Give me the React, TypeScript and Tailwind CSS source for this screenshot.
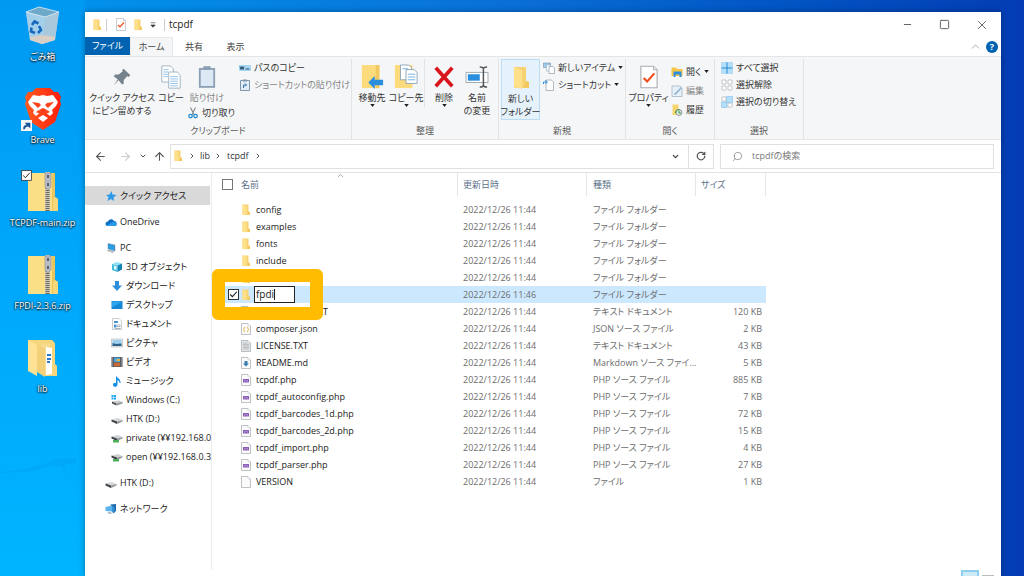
import React from "react";
import { ArrowLeft, ArrowRight, ArrowUp, ChevronDown, ChevronRight, ChevronUp, Minus, RotateCw, Search, Square, X } from "lucide-react";

type FileKind = "folder" | "text" | "json" | "md" | "php" | "blank";

interface FileRow {
  name: string;
  kind: FileKind;
  date?: string;
  type: string;
  size?: string;
  renaming?: boolean;
}

const FOLDER_TYPE = "ファイル フォルダー";
const PHP_TYPE = "PHP ソース ファイル";

const files: FileRow[] = [
  { name: "config", kind: "folder", type: FOLDER_TYPE },
  { name: "examples", kind: "folder", type: FOLDER_TYPE },
  { name: "fonts", kind: "folder", type: FOLDER_TYPE },
  { name: "include", kind: "folder", type: FOLDER_TYPE },
  { name: "tools", kind: "folder", type: FOLDER_TYPE },
  { name: "fpdi", kind: "folder", type: FOLDER_TYPE, date: "2022/12/26 11:46", renaming: true },
  { name: "CHANGELOG.TXT", kind: "text", type: "テキスト ドキュメント", size: "120 KB" },
  { name: "composer.json", kind: "json", type: "JSON ソース ファイル", size: "2 KB" },
  { name: "LICENSE.TXT", kind: "text", type: "テキスト ドキュメント", size: "43 KB" },
  { name: "README.md", kind: "md", type: "Markdown ソース ファイ...", size: "5 KB" },
  { name: "tcpdf.php", kind: "php", type: PHP_TYPE, size: "885 KB" },
  { name: "tcpdf_autoconfig.php", kind: "php", type: PHP_TYPE, size: "7 KB" },
  { name: "tcpdf_barcodes_1d.php", kind: "php", type: PHP_TYPE, size: "72 KB" },
  { name: "tcpdf_barcodes_2d.php", kind: "php", type: PHP_TYPE, size: "15 KB" },
  { name: "tcpdf_import.php", kind: "php", type: PHP_TYPE, size: "4 KB" },
  { name: "tcpdf_parser.php", kind: "php", type: PHP_TYPE, size: "27 KB" },
  { name: "VERSION", kind: "blank", type: "ファイル", size: "1 KB" },
];

/* ---------- icons ---------- */

const FolderIcon = ({ className = "h-3 w-[10px]" }: { className?: string }) => (
  <svg viewBox="0 0 20 24" className={`${className} shrink-0`}>
    <path d="M3 1h12v14l3 1v6H3z" fill="#f6d273" />
    <path d="M15 15l3 1v6h-5z" fill="#f3c95c" />
    <path d="M3 1l8 3v19l-8-2z" fill="#ffe08a" />
  </svg>
);

const FileIcon = ({ kind }: { kind: FileKind }) => {
  if (kind === "folder") return <FolderIcon />;
  return (
    <svg viewBox="0 0 20 24" className="h-3 w-[10px] shrink-0">
      <path d="M1 1h13l5 5v17H1z" fill={kind === "text" ? "#e3e5e6" : "#fbfbfb"} stroke="#a9adb1" strokeWidth="1.5" />
      <path d="M14 1v5h5" fill="#fff" stroke="#b9bcbf" />
      {kind === "text" && <path d="M4 6h9M4 9h12M4 12h12M4 15h12M4 18h12" stroke="#aab0b5" strokeWidth="1.4" />}
      {kind === "json" && (
        <path d="M8 8c-3 0-1 4-3 5 2 1 0 5 3 5M12 8c3 0 1 4 3 5-2 1 0 5-3 5" fill="none" stroke="#d9a92c" strokeWidth="1.8" />
      )}
      {kind === "md" && <path d="M7 8h6v5h3l-6 6-6-6h3z" fill="#3c7fb1" />}
      {kind === "php" && <path d="M4 10h12v7H4z" fill="#8a5cb8" />}
      {kind === "php" && <path d="M6 14h2M9 13h2M12 14h2" stroke="#d8c6ec" strokeWidth="1.5" />}
    </svg>
  );
};

const CheckDocIcon = ({ className }: { className: string }) => (
  <svg viewBox="0 0 20 26" className={`${className} shrink-0`}>
    <path d="M1 1h14l4 4v20H1z" fill="#fff" stroke="#a6abb0" strokeWidth="1.2" />
    <path d="M15 1v4h4" fill="#eee" stroke="#a6abb0" />
    <path d="M4 14l4 4 8-9" fill="none" stroke="#f04e1c" strokeWidth="2.4" />
  </svg>
);

const BinIcon = () => (
  <svg viewBox="0 0 36 40" className="h-10 w-9">
    <path d="M1 6l13-5 20 5-4 28-13 4-12-4z" fill="#a8cfe6" opacity=".85" />
    <path d="M1 6l13-5 20 5-14 5z" fill="#6fa9c9" />
    <path d="M20 11l14-5-4 28-12 4z" fill="#a9c8dc" />
    <path d="M1 6l19 5-2 27-13-4z" fill="#a3cfea" />
    <path d="M5 31l13-2 12 2v3l-13 4-12-4z" fill="#d9cfc7" />
    <path d="M1 6l13-5 20 5-14 5z" fill="none" stroke="#dcecf5" strokeWidth=".8" />
    <g fill="none" stroke="#1668bd" strokeWidth="2.6">
      <path d="M7 19l2.500-3.500 4 2M14 20l2 4-3 3M10 27l-4-1.500 .5-4" />
    </g>
  </svg>
);

const BraveIcon = () => (
  <svg viewBox="0 0 36 42" className="h-11 w-9">
    <defs>
      <linearGradient id="brave" x1="0" x2="1">
        <stop offset="0" stopColor="#ff5a1f" />
        <stop offset="1" stopColor="#ff1f0c" />
      </linearGradient>
    </defs>
    <path d="M11 0h14l4 4 4 0 3 5-1 4 1 3-6 18-12 8-12-8L0 16l1-3-1-4 3-5h4z" fill="url(#brave)" />
    <path d="M8 7l6 1 4-1 4 1 6-1 5 7-2 4-4 4 1 3-3 3-5-4 2-2-4-2-4 2 2 2-5 4-3-3 1-3-4-4-2-4z" fill="#fff" />
    <path d="M13 30l5-3 5 3-5 4z" fill="#fff" />
    <path d="M7 14l7 1 2 2-3 3zM29 14l-7 1-2 2 3 3z" fill="#fb4219" />
    <path d="M11 24l3-2 4 3 4-3 3 2-4 2-3 1-3-1z" fill="#fb4219" />
  </svg>
);

const ZipIcon = () => (
  <svg viewBox="0 0 32 40" className="h-10 w-8">
    <path d="M1 1h27v24l3 2v12H1z" fill="#e9c55e" />
    <path d="M1 1h24v38H1z" fill="#fbdf86" />
    <path d="M28 25l3 2v12h-5V27z" fill="#f5d678" />
    <path d="M18 0h5v39h-5z" fill="#cfc9b8" />
    <path d="M20.500 16v23" stroke="#6f6a60" strokeWidth="4" strokeDasharray="1 1" />
    <path d="M18 1h6v14l-3 3-3-3z" fill="#b7bcc4" stroke="#8c9097" strokeWidth=".6" />
    <path d="M20 3h2v3h-2zM20 11h2v3h-2z" fill="#5c6068" />
  </svg>
);

const OpenFolderIcon = () => (
  <svg viewBox="0 0 32 40" className="h-10 w-8">
    <path d="M1 2h24l3 3v21l2 2v10H18z" fill="#f5d67c" />
    <path d="M14 6h9v30h-9z" fill="#f7dc8f" />
    <path d="M19 9l6 1v26l-6 1z" fill="#fff" />
    <path d="M20 17h4M20 21h4M20 24h3" stroke="#2d78c8" strokeWidth="2" />
    <path d="M1 2l9 5v31L1 33z" fill="#ffe294" />
    <path d="M10 7l8 3v29l-8-5z" fill="#f3d079" />
  </svg>
);

type SideKind = "star" | "cloud" | "pc" | "cube" | "down" | "desktop" | "doc" | "picture" | "video" | "music" | "windrive" | "drive" | "netdrive" | "network";

const sideShapes: Record<SideKind, React.ReactNode> = {
  star: <path d="M13 2l2 7 8 1-6 5 1 7-6-4-7 4 2-8-5-4 7-1z" fill="#2f9be8" />,
  cloud: (
    <>
      <path d="M1 16c0-4 4-5 5-5 1-5 9-7 12-1 4 0 6 3 5 7 0 2-2 3-4 3H5c-2 0-4-2-4-4z" fill="#0f6cc0" />
      <path d="M3 19l12-7c5-2 8 1 8 4s-2 4-4 4H5z" fill="#2b9cea" />
    </>
  ),
  pc: (
    <>
      <path d="M6 3l14 3v12L6 14z" fill="#2a9be5" stroke="#7b8a96" />
      <path d="M2 17l7-2 11 4-5 3z" fill="#b5bec6" />
    </>
  ),
  cube: (
    <>
      <path d="M2 6l10-4 10 3-9 4z" fill="#8fe3f5" />
      <path d="M2 6l11 3v13L2 18z" fill="#45bede" />
      <path d="M13 9l9-4v12l-9 5z" fill="#1483b5" />
      <path d="M6 9l5 1v8l-5-2z" fill="#e3f8fc" />
    </>
  ),
  down: <path d="M8 2h8v9h6L12 22 2 11h6z" fill="#2e8fdd" />,
  desktop: (
    <>
      <path d="M1 4h22v16H1z" fill="#1587d6" />
      <path d="M2 5h20l-20 12z" fill="#2ea6ee" />
    </>
  ),
  doc: (
    <>
      <path d="M3 1h13l5 5v17H3z" fill="#fff" stroke="#959ca3" />
      <path d="M6 6h8v4H6zM6 13h5v6H6z" fill="#4796d2" />
      <path d="M12 14h7M12 17h7M7 21h12" stroke="#8a98a5" strokeWidth="1.500" />
    </>
  ),
  picture: (
    <>
      <path d="M1 4h22v16H1z" fill="#e9edf0" stroke="#9aa2a9" />
      <path d="M3 6h18v12H3z" fill="#9fd0ef" />
      <path d="M3 12l7 2 11-1v5H3z" fill="#2e5f88" />
    </>
  ),
  video: (
    <>
      <path d="M1 2h22v20H1z" fill="#454a52" />
      <path d="M6 3h12v9H6z" fill="#4ba4de" />
      <path d="M6 13h12v8H6z" fill="#c76a3a" />
      <path d="M11 6h7v4h-7z" fill="#e2b644" />
      <path d="M3.500 3v19M20.500 3v19" stroke="#d8dde1" strokeWidth="2" strokeDasharray="2 2" />
    </>
  ),
  music: <path d="M10 1c1 5 10 6 9 15h-2c0-4-2-5-4-6v9c0 6-9 6-9 1s4-4 6-4z" fill="#1590e8" />,
  windrive: (
    <>
      <path d="M1 2h4v4H1zM6 2h4v4H6zM1 7h4v4H1zM6 7h4v4H6z" fill="#19a5ee" />
      <path d="M2 15l14-2 7 3-12 3z" fill="#c7cbce" />
      <path d="M2 15l9 4v4l-9-4z" fill="#4b4f53" />
      <path d="M11 19l12-3v3l-12 4z" fill="#8b9094" />
    </>
  ),
  drive: (
    <>
      <path d="M1 13l13-3 9 4-11 3z" fill="#d5d8da" />
      <path d="M1 13l11 4v5L1 17z" fill="#3d4044" />
      <path d="M12 17l11-3v3l-11 5z" fill="#96999c" />
    </>
  ),
  netdrive: (
    <>
      <path d="M1 9l13-3 9 4-11 3z" fill="#cfd3d5" />
      <path d="M1 9l11 4v5L1 13z" fill="#3d4044" />
      <path d="M12 13l11-3v3l-11 5z" fill="#96999c" />
      <path d="M4 16h12v5H4z" fill="#4fae5b" />
    </>
  ),
  network: (
    <>
      <path d="M11 3l11-1v14l-6 5z" fill="#1d69ac" />
      <path d="M1 8l13-3v12L1 16z" fill="#5bb3ec" />
      <path d="M14 5l5 3v12l-5-3z" fill="#348fd3" />
      <path d="M5 18l8 1v3l-6-1z" fill="#9aa9b5" />
    </>
  ),
};

const SideIcon = ({ kind }: { kind: SideKind }) => (
  <svg viewBox="0 0 24 24" className="size-3 shrink-0">{sideShapes[kind]}</svg>
);

/* ---------- desktop ---------- */

const DesktopItem = ({ label, children }: { label: string; children: React.ReactNode }) => (
  <button type="button" className="flex h-[83px] w-full shrink-0 flex-col items-center gap-[3px] pt-1">
    <span className="relative flex h-11 items-center">{children}</span>
    <span className="text-[9px] leading-3 whitespace-nowrap text-white [text-shadow:0_1px_2px_#000,0_0_2px_#000]">{label}</span>
  </button>
);

const Desktop = () => (
  <aside className="flex w-[85px] shrink-0 flex-col bg-linear-to-b from-[#0099f2] via-[#00a8fb] to-[#00b4ff]">
    <DesktopItem label="ごみ箱"><BinIcon /></DesktopItem>
    <DesktopItem label="Brave">
      <BraveIcon />
      <svg viewBox="0 0 20 20" className="absolute bottom-0 -left-1 size-[11px]">
        <path d="M0 0h20v20H0z" fill="#f4f6f8" />
        <path d="M4 17c0-6 2-8 6-8l-3-4h10v10l-4-3c-4 0-5 2-6 5z" fill="#1c5296" />
      </svg>
    </DesktopItem>
    <DesktopItem label="TCPDF-main.zip">
      <ZipIcon />
      <svg viewBox="0 0 20 20" className="absolute top-0 -left-[6px] size-[11px]">
        <path d="M1 1h18v18H1z" fill="#fff" stroke="#333" strokeWidth="1.500" />
        <path d="M4 10l4 4 8-9" fill="none" stroke="#222" strokeWidth="1.800" />
      </svg>
    </DesktopItem>
    <DesktopItem label="FPDI-2.3.6.zip"><ZipIcon /></DesktopItem>
    <DesktopItem label="lib"><OpenFolderIcon /></DesktopItem>
    <svg viewBox="0 0 85 60" className="mt-9 w-full" fill="#0097e8" opacity=".25">
      <path d="M0 21l20-2 25-6 10-5 22-1-1 5-12 2 4 14-6-13-8-1-20 6-34 2z" />
    </svg>
  </aside>
);

/* ---------- ribbon ---------- */

const Caret = () => (
  <svg viewBox="0 0 6 4" className="h-[3px] w-[5px] shrink-0"><path d="M0 0h6L3 4z" fill="#222" /></svg>
);

interface BigButtonProps {
  icon: React.ReactNode;
  lines: string[];
  className?: string;
  menu?: boolean;
}

const BigButton = ({ icon, lines, className = "", menu }: BigButtonProps) => (
  <button type="button" className={`flex flex-col items-center pt-1 ${className}`}>
    <span className="flex h-7 items-center">{icon}</span>
    {lines.map((line) => (
      <span key={line} className="leading-[13px] whitespace-nowrap">{line}</span>
    ))}
    {menu && <Caret />}
  </button>
);

interface SmallButtonProps {
  icon: React.ReactNode;
  label: string;
  menu?: boolean;
  muted?: boolean;
}

const SmallButton = ({ icon, label, menu, muted }: SmallButtonProps) => (
  <button type="button" className={`flex h-[17px] items-center gap-[3px] whitespace-nowrap ${muted ? "text-[#868686]" : ""}`}>
    {icon}
    {label}
    {menu && <Caret />}
  </button>
);

const RibbonGroup = ({ label, className, children }: { label: string; className: string; children: React.ReactNode }) => (
  <section className={`flex shrink-0 flex-col border-r border-[#e2e3e4] ${className}`}>
    <div className="flex h-[66px] items-start">{children}</div>
    <h2 className="text-center leading-4 text-[#5a5a5a]">{label}</h2>
  </section>
);

const Pages = () => (
  <g stroke="#8ca3b5" fill="#fff">
    <path d="M1 1h11l4 4v17H1z" />
    <path d="M10 9h11l4 4v17H10z" />
    <path d="M3 6h7M3 9h6M3 12h6M3 15h6M12 15h10M12 18h10M12 21h10M12 24h10M12 27h10" stroke="#8dbfe8" strokeWidth="1.200" />
  </g>
);

const SmallSvg = ({ children }: { children: React.ReactNode }) => (
  <svg viewBox="0 0 24 24" className="size-3 shrink-0">{children}</svg>
);

const Ribbon = () => (
  <div className="flex h-[84px] shrink-0 overflow-hidden border-y border-[#e4e5e6] bg-[#f5f6f7] pt-[2px]">
    <RibbonGroup label="クリップボード" className="w-[267px]">
      <BigButton
        className="w-[74px]"
        lines={["クイック アクセス", "にピン留めする"]}
        icon={
          <svg viewBox="0 0 24 24" className="size-5">
            <path d="M14 2l8 8-2 2-2-1-4 5 0 4-2 1-4-5-6 6 5-7-5-4 2-2 4 0 5-4-1-1z" fill="#76828c" />
          </svg>
        }
      />
      <BigButton className="w-6" lines={["コピー"]} icon={<svg viewBox="0 0 26 31" className="h-6 w-5"><Pages /></svg>} />
      <div className="flex w-[56px] flex-col items-start pl-1">
        <BigButton
          className="w-10 text-[#868686]"
          lines={["貼り付け"]}
          icon={
            <svg viewBox="0 0 20 26" className="h-6 w-[18px]">
              <path d="M1 3h18v22H1z" fill="#8a9fb3" />
              <path d="M3 5h14v18H3z" fill="#dce8f4" />
              <path d="M6 1h8v4H6z" fill="#8a9fb3" />
            </svg>
          }
        />
        <SmallButton
          label="切り取り"
          icon={
            <SmallSvg>
              <path d="M7 1l7 14M17 1l-7 14" stroke="#7b8790" strokeWidth="2.200" />
              <circle cx="7" cy="18" r="3.500" fill="none" stroke="#1f87d1" strokeWidth="2.500" />
              <circle cx="17" cy="18" r="3.500" fill="none" stroke="#1f87d1" strokeWidth="2.500" />
            </SmallSvg>
          }
        />
      </div>
      <div className="flex flex-col">
        <SmallButton
          label="パスのコピー"
          icon={
            <SmallSvg>
              <path d="M0 6h24v12H0z" fill="#a9d8f5" />
              <path d="M2 9l2 6 2-6 2 6 2-6M13 14h8" fill="none" stroke="#1d3f5e" strokeWidth="1.800" />
            </SmallSvg>
          }
        />
        <SmallButton
          muted
          label="ショートカットの貼り付け"
          icon={
            <SmallSvg>
              <path d="M3 3h18v20H3z" fill="#e3edf7" stroke="#7f96ab" strokeWidth="2" />
              <path d="M8 1h8v4H8z" fill="#7f96ab" />
              <path d="M9 18v-6h6M12 9l3 3-3 3" fill="none" stroke="#3d73a8" strokeWidth="2" />
            </SmallSvg>
          }
        />
      </div>
    </RibbonGroup>

    <RibbonGroup label="整理" className="w-[147px]">
      <BigButton
        menu
        className="w-9 pl-1"
        lines={["移動先"]}
        icon={
          <svg viewBox="0 0 26 28" className="h-[26px] w-6">
            <path d="M2 1h19v25H2z" fill="#fbdb7c" />
            <path d="M17 1h4v25h-4z" fill="#f1c95e" />
            <path d="M9 20l7-7v4h9v6h-9v4z" fill="#2a8ddd" />
          </svg>
        }
      />
      <BigButton
        menu
        className="w-[37px] border-r border-[#e2e3e4]"
        lines={["コピー先"]}
        icon={
          <svg viewBox="0 0 26 28" className="h-[26px] w-6">
            <path d="M1 1h19v25H1z" fill="#fbdb7c" />
            <path d="M7 1h9l3 3v13H7z" fill="#fff" stroke="#8ca3b5" />
            <path d="M13 6h9l3 3v12H13z" fill="#fff" stroke="#8ca3b5" />
            <path d="M15 11h8M15 14h8M15 17h8M9 5h6" stroke="#72aee0" />
          </svg>
        }
      />
      <BigButton
        menu
        className="w-[38px]"
        lines={["削除"]}
        icon={<svg viewBox="0 0 24 24" className="size-[22px]"><path d="M3 2l18 20M21 2L3 22" stroke="#d8141c" strokeWidth="4" /></svg>}
      />
      <BigButton
        className="w-7"
        lines={["名前", "の変更"]}
        icon={
          <svg viewBox="0 0 26 24" className="h-[22px] w-6">
            <path d="M1 7h24v11H1z" fill="#fff" stroke="#9aa5ae" />
            <path d="M3 9h13v7H3z" fill="#2a8ddd" />
            <path d="M16 1c3 0 4 1 4 2 0-1 1-2 4-2M20 3v18M16 23c3 0 4-1 4-2 0 1 1 2 4 2" fill="none" stroke="#555" strokeWidth="1.600" />
          </svg>
        }
      />
    </RibbonGroup>

    <RibbonGroup label="新規" className="w-[127px]">
      <BigButton
        className="ml-[2px] h-[61px] w-[39px] border border-[#bcdcf4] bg-[#e5f1fb]"
        lines={["新しい", "フォルダー"]}
        icon={<FolderIcon className="h-6 w-5" />}
      />
      <div className="flex flex-col pl-[3px]">
        <SmallButton
          menu
          label="新しいアイテム"
          icon={
            <SmallSvg>
              <path d="M1 2h14v9H1z" fill="#9cccf0" stroke="#6b8094" />
              <path d="M7 6h8v12H7z" fill="#fff" stroke="#8ca3b5" />
              <path d="M12 9h8l3 3v11H12z" fill="#fff" stroke="#8ca3b5" strokeWidth="1.500" />
            </SmallSvg>
          }
        />
        <SmallButton
          menu
          label="ショートカット"
          icon={
            <SmallSvg>
              <path d="M6 2h11l4 4v17H6z" fill="#fff" stroke="#9aa0a5" strokeWidth="1.500" />
              <path d="M1 10V6h6M5 3l4 3-4 4" fill="none" stroke="#2a8ddd" strokeWidth="2" />
            </SmallSvg>
          }
        />
      </div>
    </RibbonGroup>

    <RibbonGroup label="開く" className="w-[89px]">
      <BigButton menu className="w-[45px]" lines={["プロパティ"]} icon={<CheckDocIcon className="h-6 w-[18px]" />} />
      <div className="flex flex-col gap-[2px] pt-1">
        <SmallButton
          menu
          label="開く"
          icon={
            <SmallSvg>
              <path d="M1 3h9l2 3h11v14H1z" fill="#f5c547" />
              <path d="M5 11h16v11h-4v-5H9v5H5z" fill="#2a8ddd" />
            </SmallSvg>
          }
        />
        <SmallButton
          muted
          label="編集"
          icon={
            <SmallSvg>
              <path d="M2 2h16l4 4v17H2z" fill="#e8f1f8" stroke="#9db1c2" strokeWidth="1.500" />
              <path d="M7 17L20 4l2 2L10 19l-4 1z" fill="#8fb4d0" />
            </SmallSvg>
          }
        />
        <SmallButton
          label="履歴"
          icon={
            <SmallSvg>
              <path d="M3 1h12v21H3z" fill="#f8d46e" />
              <circle cx="16" cy="17" r="6" fill="#dfe4e6" stroke="#7b868d" strokeWidth="1.500" />
              <path d="M9 18c0-6 5-8 9-6M16 14v4h4" fill="none" stroke="#2f9e44" strokeWidth="2" />
            </SmallSvg>
          }
        />
      </div>
    </RibbonGroup>

    <RibbonGroup label="選択" className="w-[89px]">
      <div className="flex flex-col pl-[6px]">
        <SmallButton
          label="すべて選択"
          icon={<SmallSvg><path d="M1 1h22v22H1z" fill="#b5dff9" stroke="#8ccbf3" /><path d="M12 1v22M1 12h22" stroke="#268cd6" strokeWidth="2" /></SmallSvg>}
        />
        <SmallButton
          label="選択解除"
          icon={<SmallSvg><path d="M2 2h8v8H2zM14 2h8v8h-8zM2 14h8v8H2zM14 14h8v8h-8z" fill="#fff" stroke="#b4b8bb" strokeWidth="1.500" /></SmallSvg>}
        />
        <SmallButton
          label="選択の切り替え"
          icon={
            <SmallSvg>
              <path d="M2 2h8v8H2zM14 14h8v8h-8z" fill="#fff" stroke="#b4b8bb" strokeWidth="1.500" />
              <path d="M11 1h12v12H11zM1 12h11v11H1z" fill="#b5dff9" stroke="#6fb9ea" />
            </SmallSvg>
          }
        />
      </div>
    </RibbonGroup>
  </div>
);

/* ---------- window parts ---------- */

const TitleBar = () => (
  <header className="flex h-[25px] shrink-0 items-center pl-[7px] text-[#222]">
    <FolderIcon className="h-3 w-[10px]" />
    <span className="ml-1 h-3 w-px bg-[#ccc]" />
    <CheckDocIcon className="ml-[9px] h-[13px] w-[10px]" />
    <FolderIcon className="ml-[7px] h-3 w-[10px]" />
    <button type="button" aria-label="クイック アクセス ツール バーのカスタマイズ" className="ml-[7px]">
      <svg viewBox="0 0 8 8" className="size-[6px]"><path d="M1 1h6M1 4h6L4 7z" fill="#333" stroke="#333" strokeWidth=".8" /></svg>
    </button>
    <span className="ml-2 h-3 w-px bg-[#ccc]" />
    <h1 className="ml-1 text-[10px]">tcpdf</h1>
    <div className="ml-auto flex h-full pr-px text-[#555]">
      <button type="button" aria-label="最小化" className="flex w-[37px] items-center justify-center"><Minus size={11} strokeWidth={2} /></button>
      <button type="button" aria-label="最大化" className="flex w-[37px] items-center justify-center"><Square size={11} strokeWidth={2} /></button>
      <button type="button" aria-label="閉じる" className="flex w-[37px] items-center justify-center"><X size={14} strokeWidth={1.5} /></button>
    </div>
  </header>
);

const Tabs = () => (
  <nav className="flex h-[19px] shrink-0 text-[#444]">
    <button type="button" className="mb-px w-[45px] bg-[#0063b1] text-white">ファイル</button>
    <button type="button" className="w-[43px] border-x border-t border-[#e8e9ea] bg-[#f5f6f7]">ホーム</button>
    <button type="button" className="w-[42px]">共有</button>
    <button type="button" className="w-[41px]">表示</button>
    <div className="ml-auto flex items-center gap-1 pr-[3px]">
      <button type="button" aria-label="リボンの最小化"><ChevronUp size={13} strokeWidth={1.5} className="text-[#999]" /></button>
      <button type="button" aria-label="ヘルプ" className="flex size-3 items-center justify-center rounded-full bg-[#0063b1] text-[9px] font-bold text-white">?</button>
    </div>
  </nav>
);

const AddressBar = () => (
  <div className="flex h-[33px] shrink-0 items-center border-b border-[#e3e3e3] pr-[7px] pl-[9px] text-[#555]">
    <button type="button" aria-label="戻る"><ArrowLeft size={13} /></button>
    <button type="button" aria-label="進む" className="ml-3 text-[#ccc]"><ArrowRight size={13} /></button>
    <button type="button" aria-label="最近表示した場所" className="ml-[7px]"><ChevronDown size={8} strokeWidth={3} /></button>
    <button type="button" aria-label="上へ" className="ml-[6px]"><ArrowUp size={13} /></button>
    <div className="ml-1 flex h-[25px] flex-1 items-center border border-[#e0e0e0] pl-[2px] text-[#333]">
      <FolderIcon className="h-3 w-[10px]" />
      <ChevronRight size={8} strokeWidth={3} className="ml-[5px] text-[#555]" />
      <a href="#lib" className="ml-1">lib</a>
      <ChevronRight size={8} strokeWidth={3} className="ml-1 text-[#555]" />
      <a href="#tcpdf" className="ml-[5px]">tcpdf</a>
      <ChevronRight size={8} strokeWidth={3} className="ml-[5px] text-[#555]" />
      <button type="button" aria-label="以前の場所" className="mr-2 ml-auto"><ChevronDown size={9} strokeWidth={3} /></button>
      <button type="button" aria-label="最新の情報に更新" className="flex h-full w-[25px] items-center justify-center border-l border-[#e0e0e0]">
        <RotateCw size={10} strokeWidth={3} className="text-[#555]" />
      </button>
    </div>
    <label className="ml-[6px] flex h-[25px] w-[274px] items-center border border-[#e0e0e0] pl-[11px]">
      <Search size={11} strokeWidth={1.5} className="-scale-x-100 text-[#777]" />
      <input type="search" aria-label="tcpdfの検索" placeholder="tcpdfの検索" className="ml-[9px] min-w-0 flex-1 outline-none placeholder:text-[#777]" />
    </label>
  </div>
);

const pcItems: { kind: SideKind; label: string }[] = [
  { kind: "cube", label: "3D オブジェクト" },
  { kind: "down", label: "ダウンロード" },
  { kind: "desktop", label: "デスクトップ" },
  { kind: "doc", label: "ドキュメント" },
  { kind: "picture", label: "ピクチャ" },
  { kind: "video", label: "ビデオ" },
  { kind: "music", label: "ミュージック" },
  { kind: "windrive", label: "Windows (C:)" },
  { kind: "drive", label: "HTK (D:)" },
  { kind: "netdrive", label: "private (¥¥192.168.0.3)" },
  { kind: "netdrive", label: "open (¥¥192.168.0.3)" },
];

const SideLink = ({ kind, label, className = "pl-5" }: { kind: SideKind; label: string; className?: string }) => (
  <li>
    <a href="#" className={`flex h-[19px] items-center gap-[3px] overflow-hidden whitespace-nowrap ${className}`}>
      <SideIcon kind={kind} />
      {label}
    </a>
  </li>
);

const SideNav = () => (
  <nav className="w-[127px] shrink-0 overflow-hidden border-r border-[#ececec] pt-[13px] text-[#222]">
    <ul className="flex flex-col gap-[7px]">
      <SideLink kind="star" label="クイック アクセス" className="mr-px bg-[#d9d9d9] pl-5" />
      <SideLink kind="cloud" label="OneDrive" />
      <li>
        <ul>
          <SideLink kind="pc" label="PC" />
          {pcItems.map((item) => (
            <SideLink key={item.label} kind={item.kind} label={item.label} className="pl-[26px]" />
          ))}
        </ul>
      </li>
      <SideLink kind="drive" label="HTK (D:)" />
      <SideLink kind="network" label="ネットワーク" />
    </ul>
  </nav>
);

const NameCell = ({ file }: { file: FileRow }) => {
  if (!file.renaming) {
    return (
      <div className="flex items-center gap-[5px] pl-[19px]">
        <FileIcon kind={file.kind} />
        {file.name}
      </div>
    );
  }
  return (
    <div className="relative flex h-[17px] items-center pl-[6px]">
      <span className="relative flex size-[11px] shrink-0">
        <input type="checkbox" defaultChecked aria-label={file.name} className="size-[11px] appearance-none border border-[#333] bg-white" />
        <svg viewBox="0 0 20 20" className="pointer-events-none absolute inset-0"><path d="M4 10l4 4 8-9" fill="none" stroke="#222" strokeWidth="2" /></svg>
      </span>
      <span className="ml-[2px] flex"><FileIcon kind="folder" /></span>
      <span className="relative ml-[3px] flex">
        <input type="text" aria-label="名前の変更" defaultValue={file.name} className="h-[17px] w-[41px] border border-[#222] bg-white pl-px text-[10px] outline-none" />
        <span className="absolute top-[3px] left-[20px] h-[11px] w-px bg-[#222]" />
      </span>
      {/* callout frame around the item being renamed */}
      <span className="pointer-events-none absolute -top-[17px] -left-[10px] h-[51px] w-[111px] rounded-md border-[13px] border-[#ffbc00]" />
    </div>
  );
};

const FileTable = () => (
  <table className="w-[544px] table-fixed text-left">
    <colgroup>
      <col className="w-[236px]" />
      <col className="w-[129px]" />
      <col className="w-[109px]" />
      <col className="w-[70px]" />
    </colgroup>
    <thead className="text-[#5d718a]">
      <tr className="h-7 align-top">
        <th className="relative p-0 font-normal">
          <label className="flex h-[23px] items-center gap-2 border-r border-[#e6e6e6]">
            <input type="checkbox" className="size-[11px] appearance-none border border-[#777] bg-white" />
            名前
          </label>
          <ChevronUp size={9} strokeWidth={2} className="absolute -top-[2px] left-[114px] text-[#888]" />
        </th>
        <th className="p-0 font-normal"><div className="flex h-[23px] items-center border-r border-[#e6e6e6] pl-[5px]">更新日時</div></th>
        <th className="p-0 font-normal"><div className="flex h-[23px] items-center border-r border-[#e6e6e6] pl-[6px]">種類</div></th>
        <th className="p-0 font-normal"><div className="flex h-[23px] items-center border-r border-[#e6e6e6] pl-[5px]">サイズ</div></th>
      </tr>
    </thead>
    <tbody className="leading-[17px] whitespace-nowrap text-[#6d6d6d]">
      {files.map((file) => (
        <tr key={file.name} className={`h-[17px] ${file.renaming ? "bg-[#cce8ff]" : ""}`}>
          <td className="p-0 text-[#222]"><NameCell file={file} /></td>
          <td className="p-0 pl-[5px]">{file.date ?? "2022/12/26 11:44"}</td>
          <td className="p-0 pl-[6px]">{file.type}</td>
          <td className="p-0 pr-1 text-right">{file.size}</td>
        </tr>
      ))}
    </tbody>
  </table>
);

const App: React.FC = () => (
  <div className="flex h-screen overflow-hidden bg-linear-to-r from-[#0098f0] via-[#0a6fd6] to-[#043cb4] font-['Open_Sans','Noto_Sans_CJK_JP',sans-serif] text-[9px] text-[#333] [font-feature-settings:'palt']">
    <Desktop />
    <main className="mt-3 mr-[23px] flex min-w-0 flex-1 flex-col bg-white shadow-[0_0_6px_rgba(0,0,0,0.35)]">
      <TitleBar />
      <Tabs />
      <Ribbon />
      <AddressBar />
      <div className="flex min-h-0 flex-1">
        <SideNav />
        <div className="min-w-0 flex-1 pl-[10px]">
          <FileTable />
        </div>
      </div>
      <footer className="flex h-[6px] shrink-0 items-end justify-end gap-[3px] pr-[7px]">
        <span className="h-[6px] w-[18px] border-2 border-b-0 border-[#8fd0f0] bg-[#cdeaf8]" />
        <span className="h-px w-3 bg-[#bbb]" />
      </footer>
    </main>
  </div>
);

export default App;
